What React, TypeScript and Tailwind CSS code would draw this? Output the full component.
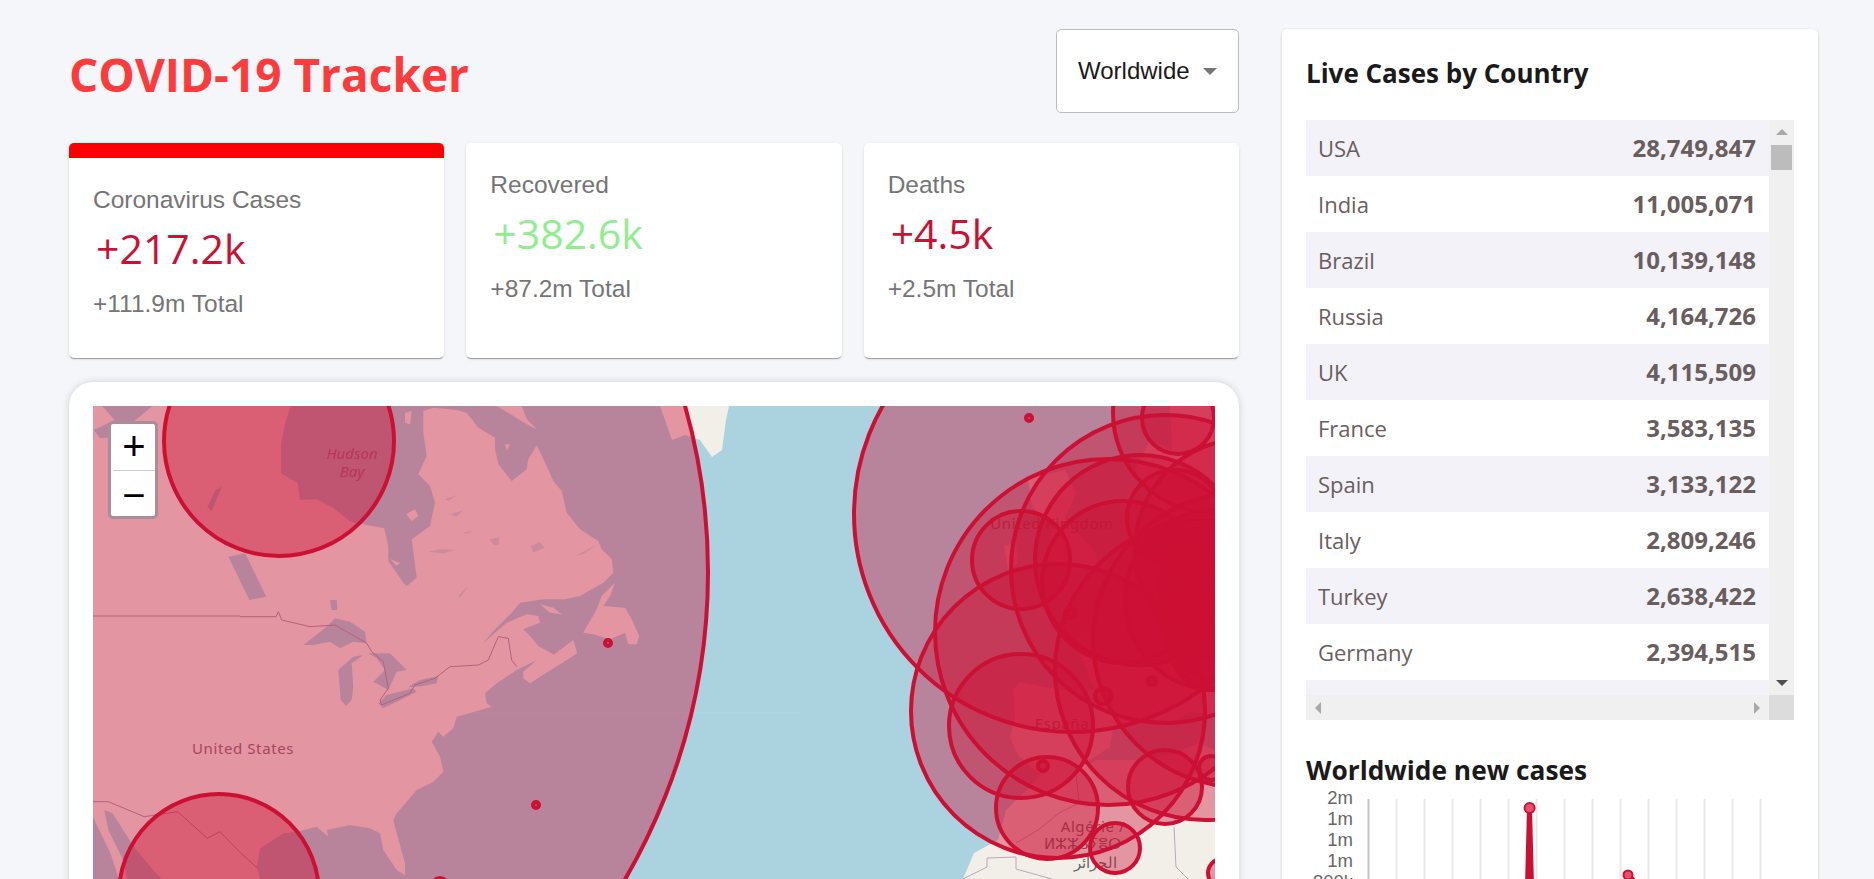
import React from "react";

const SANS = "font-['Open_Sans','Noto_Sans',sans-serif]";
const ARIAL = "font-['Liberation_Sans',Arial,sans-serif]";

const stats = [
  { title: "Coronavirus Cases", cases: "+217.2k", total: "+111.9m Total", active: true, color: "text-[#cc1034]" },
  { title: "Recovered", cases: "+382.6k", total: "+87.2m Total", active: false, color: "text-[#90ee90]" },
  { title: "Deaths", cases: "+4.5k", total: "+2.5m Total", active: false, color: "text-[#cc1034]" },
];

const countries = [
  ["USA", "28,749,847"],
  ["India", "11,005,071"],
  ["Brazil", "10,139,148"],
  ["Russia", "4,164,726"],
  ["UK", "4,115,509"],
  ["France", "3,583,135"],
  ["Spain", "3,133,122"],
  ["Italy", "2,809,246"],
  ["Turkey", "2,638,422"],
  ["Germany", "2,394,515"],
];

// [x, y, r] in page pixels, the map group is shifted back to its own origin
const circles: number[][] = [
  [98, 572, 610],
  [279, 441, 115],
  [219, 894, 100],
  [608, 643, 3],
  [536, 805, 3],
  [440, 886, 8],
  [1072, 514, 218],
  [1058, 711, 147],
  [1108, 632, 173],
  [1165, 569, 154],
  [1140, 560, 105],
  [1021, 560, 49],
  [1021, 726, 72],
  [1047, 808, 51],
  [1115, 848, 25],
  [1165, 787, 37],
  [1205, 670, 150],
  [1178, 418, 36],
  [1213, 413, 100],
  [1123, 582, 81],
  [1175, 518, 48],
  [1245, 549, 110],
  [1240, 640, 147],
  [1215, 600, 90],
  [1220, 600, 55],
  [1225, 620, 62],
  [1230, 590, 70],
  [1215, 640, 48],
  [1205, 620, 40],
  [1215, 600, 50],
  [1210, 655, 35],
  [1029, 418, 3],
  [1043, 766, 5],
  [1103, 696, 8],
  [1070, 613, 5],
  [1152, 681, 4],
  [1211, 768, 12],
  [1222, 873, 14],
];

const months = Array.from({ length: 15 }, (_, i) => 62.5 + i * 28);

// coastlines were read off crops of different scales, these bring them to page pixels
type Pt = number[];
const fromWest = (p: Pt[]) => p.map(([x, y]) => [60 + x / 2.376, 380 + y / 3]);
const fromQuebec = (p: Pt[]) => p.map(([x, y]) => [380 + x / 3, 406 + y / 3]);
const fromLakes = (p: Pt[]) => p.map(([x, y]) => [240 + x / 3, 600 + y / 3]);
const toPath = (p: Pt[]) => "M" + p.map(([x, y]) => `${x.toFixed(1)} ${y.toFixed(1)}`).join("L") + "Z";

const mainland = toPath([
  ...fromWest([
    [78, 78], [548, 78], [535, 130], [525, 190], [525, 280], [565, 310], [570, 360], [610, 358], [650, 385], [690, 425], [770, 445],
  ]),
  ...fromQuebec([
    [25, 420], [25, 465], [70, 530], [80, 540], [110, 515], [95, 400], [150, 360], [165, 290], [150, 240], [115, 205], [140, 150], [130, 80], [130, 15], [160, 5], [230, 12], [260, 20], [295, 65], [345, 95], [345, 130], [355, 175], [395, 225], [440, 190], [445, 160], [470, 118], [500, 180], [520, 225], [545, 255], [560, 320], [600, 370], [655, 405], [665, 430], [695, 460], [700, 500], [670, 530], [600, 570], [555, 580], [490, 580], [420, 590], [395, 620], [335, 680], [310, 712], [345, 680], [380, 650], [440, 625], [475, 630], [480, 650], [430, 670], [450, 690], [475, 720], [520, 745], [550, 770], [530, 775],
  ]),
  ...fromLakes([
    [850, 235], [850, 215], [890, 180], [830, 210], [770, 250], [735, 280], [740, 310], [755, 320], [650, 350], [640, 385], [610, 410], [595, 395], [575, 425], [600, 470], [610, 515], [580, 545], [530, 570], [470, 640], [460, 660], [470, 700], [495, 790], [495, 825], [470, 810], [430, 750], [420, 700], [390, 685], [330, 675], [260, 690], [265, 710], [230, 680], [170, 695], [130, 700], [60, 745], [50, 800], [60, 837], [60, 1000],
  ]),
  ...fromWest([
    [240, 1600], [240, 1497], [205, 1445], [175, 1400], [125, 1300], [105, 1290], [115, 1350], [150, 1440], [160, 1497], [140, 1497], [120, 1420], [78, 1310],
  ]),
]);

const islands = [
  fromQuebec([[610, 680], [650, 610], [665, 570], [705, 530], [690, 570], [670, 600], [735, 605], [755, 640], [778, 690], [770, 715], [745, 715], [735, 680], [690, 700], [640, 685]]),
  fromQuebec([[480, 595], [520, 605], [545, 625], [510, 620]]),
  fromQuebec([[78, 325], [105, 310], [115, 330], [95, 345]]),
  fromQuebec([[30, 460], [60, 470], [50, 480]]),
  fromQuebec([[75, 20], [95, 15], [90, 55], [75, 50]]),
  fromQuebec([[350, 0], [425, 0], [440, 40], [470, 70], [450, 60], [400, 30]]),
  fromQuebec([[375, 115], [390, 115], [380, 135]]),
  fromLakes([[850, 235], [870, 250], [900, 230], [1012, 160], [1000, 120], [960, 150]]),
];

const lakes = [
  fromLakes([[190, 135], [260, 80], [285, 55], [330, 65], [375, 95], [380, 130], [340, 125], [300, 145], [270, 125], [220, 135]]),
  fromLakes([[295, 210], [340, 170], [370, 165], [335, 190], [340, 260], [335, 300], [318, 318], [302, 300]]),
  fromLakes([[385, 160], [450, 160], [500, 210], [470, 215], [445, 270], [400, 245], [435, 210], [410, 175]]),
  fromLakes([[415, 310], [440, 285], [520, 265], [530, 275], [470, 305], [430, 325]]),
  fromLakes([[505, 260], [540, 240], [595, 228], [590, 250], [550, 258], [515, 262]]),
  fromLakes([[270, 0], [290, 0], [292, 30], [275, 30]]),
  fromWest([[80, 150], [130, 120], [100, 78], [220, 78], [170, 130], [140, 170], [95, 175]]),
  fromWest([[400, 530], [440, 520], [490, 650], [450, 660]]),
  fromWest([[370, 330], [385, 320], [360, 395], [350, 380]]),
];

// the little lakes of quebec read paler than the great lakes
const ponds = [
  fromQuebec([[145, 437], [180, 430], [225, 432], [190, 442]]),
  fromQuebec([[245, 382], [275, 374], [270, 381]]),
  fromQuebec([[452, 420], [480, 408], [493, 425], [460, 440]]),
  fromQuebec([[328, 400], [358, 394], [356, 416], [342, 418]]),
  fromQuebec([[585, 450], [650, 417], [610, 443]]),
  fromQuebec([[235, 570], [265, 540], [240, 576]]),
  fromQuebec([[195, 280], [230, 267], [205, 284]]),
  fromQuebec([[212, 325], [250, 312], [228, 333]]),
];

const borders =
  "M93 616L240 616" +
  toPath(
    fromLakes([[0, 50], [108, 50], [115, 35], [125, 60], [210, 80], [285, 75], [380, 130], [395, 155], [430, 185], [445, 265], [420, 300], [425, 315], [510, 280], [525, 255], [585, 235], [630, 200], [715, 195], [745, 180], [775, 110], [805, 115], [815, 180], [830, 200]])
  ).replace("Z", "");
const mexicoBorder = toPath(
  fromWest([[78, 1265], [115, 1265], [200, 1310], [280, 1295], [350, 1375], [380, 1355], [430, 1420], [470, 1465]])
).replace("Z", "");

function WorldMap() {
  return (
    <svg className="block h-full w-full" viewBox="0 0 1122 560">
      <defs>
        <filter id="tiles" x="0" y="0" width="100%" height="100%">
          <feGaussianBlur stdDeviation="0.6" />
        </filter>
      </defs>
      <g transform="translate(-93 -406)">
        <rect x="93" y="406" width="1122" height="560" fill="#aad3df" />

        <g filter="url(#tiles)">
          <path fill="#f2efe9" d={mainland} />
          {islands.map((p, i) => (
            <path key={i} fill="#f2efe9" d={toPath(p)} />
          ))}
          {lakes.map((p, i) => (
            <path key={i} fill="#aad3df" d={toPath(p)} />
          ))}
          {ponds.map((p, i) => (
            <path key={i} fill="#aad3df" fillOpacity="0.6" d={toPath(p)} />
          ))}

          {/* greenland tip, europe, africa */}
          <path fill="#f2efe9" d="M660 406L672 440L685 435L700 440L712 457L722 450L726 420L729 406Z" />
          <path
            fill="#f2efe9"
            d="M1215 545L1150 555L1120 585L1095 625L1075 640L1085 665L1095 690L1060 690L1020 682L1013 690L1015 717L1010 737L1018 755L1038 773L1050 772L1082 773L1090 760L1110 747L1113 728L1135 720L1170 722L1190 712L1215 715Z"
          />
          <path
            fill="#f2efe9"
            d="M963 879L974 853L998 840L1006 810L1030 787L1042 772L1082 768L1096 760L1140 760L1170 755L1198 743L1215 750L1215 966L963 966Z"
          />
          <path fill="#f2efe9" d="M1028 479L1065 470L1076 493L1065 519L1093 549L1100 565L1065 572L1048 556L1052 529L1032 506Z" />
          <path fill="#f2efe9" d="M1004 546L1016 543L1018 563L1008 570Z" />
          <path fill="#f2efe9" d="M1215 406L1170 406L1172 450L1150 440L1135 470L1160 510L1190 520L1215 530Z" />

          <g fill="none" stroke="#a894ad" strokeWidth="1">
            <path d={borders} />
            <path d={mexicoBorder} />
            <path
              stroke="#b9a8b9"
              d="M963 879L987 867L987 858L1016 857L1016 869L1052 879M1016 843L1038 830L1059 813L1079 803L1076 773M1174 827L1176 867L1188 879"
            />
          </g>
        </g>
        <path d="M93 713L800 713" stroke="#ffffff" strokeOpacity="0.12" strokeWidth="1" />

        <g className="font-['Noto_Sans',sans-serif]">
          <text x="243" y="754" textAnchor="middle" fontSize="15" fill="#8f6a80" letterSpacing="0.6">United States</text>
          <text x="352" y="459" textAnchor="middle" fontSize="15" fontStyle="italic" fill="#8f7c9c">Hudson</text>
          <text x="352" y="477" textAnchor="middle" fontSize="15" fontStyle="italic" fill="#8f7c9c">Bay</text>
          <text x="1052" y="529" textAnchor="middle" fontSize="15" fill="#666666" letterSpacing="0.6">United Kingdom</text>
          <text x="1062" y="729" textAnchor="middle" fontSize="15" fill="#666666" letterSpacing="0.6">España</text>
          <text x="1093" y="832" textAnchor="middle" fontSize="15" fill="#666666" letterSpacing="0.6">Algérie /</text>
          <text x="1082" y="849" textAnchor="middle" fontSize="15" fill="#666666">ⵍⵣⵣⴰⵢⴻⵔ</text>
          <text x="1095" y="868" textAnchor="middle" fontSize="15" fill="#666666">الجزائر</text>
        </g>

        {circles.map(([x, y, r], i) => (
          <circle key={i} cx={x} cy={y} r={r} fill="#cc1034" fillOpacity="0.4" stroke="#cc1034" strokeWidth="4" />
        ))}
      </g>
    </svg>
  );
}

function Chart() {
  return (
    <svg className="mt-[8px] block h-[130px] w-[488px] overflow-visible" viewBox="0 0 488 130">
      {months.map((x, i) => (
        <line key={x} x1={x} x2={x} y1="4" y2="130" stroke={i === 0 ? "#c4c4c4" : "#e8e8e8"} strokeWidth="2" />
      ))}
      {[
        ["2m", 3],
        ["1m", 24],
        ["1m", 45],
        ["1m", 66],
        ["800k", 87],
      ].map(([label, y], i) => (
        <text key={i} x="47" y={Number(y) + 6} textAnchor="end" fontSize="18.5" fill="#666666" className={ARIAL}>
          {label}
        </text>
      ))}
      <path d="M221 13L226 13L229 130L218 130Z" fill="#cc1034" />
      <circle cx="223.6" cy="13" r="5" fill="#e8506e" stroke="#cc1034" strokeWidth="2" />
      <path d="M320 80L326 80L334 90L318 90Z" fill="#cc1034" />
      <circle cx="322" cy="80" r="4.5" fill="#e8506e" stroke="#cc1034" strokeWidth="2" />
    </svg>
  );
}

export default function App() {
  return (
    <div className="flex h-screen justify-between overflow-hidden bg-[#f4f6fa] pt-[29px] pr-[56px] pl-[69px]">
      <div className="w-[1170px]">
        <div className="flex items-start justify-between">
          <h1 className={`${SANS} mt-[12px] text-[46px] leading-[66px] font-bold text-[#fc3c3c]`}>COVID-19 Tracker</h1>
          <div className="flex h-[84px] w-[183px] items-center justify-between rounded-[5px] border border-[#bdbdbd] bg-white pr-[21px] pl-[21px]">
            <span className={`${ARIAL} mt-[-1px] text-[24px] text-[#1a1a1a]`}>Worldwide</span>
            <span className="h-0 w-0 border-x-[7px] border-t-[7px] border-x-transparent border-t-[#757575]" />
          </div>
        </div>

        <div className="mt-[30px] grid grid-cols-3 gap-[22px]">
          {stats.map((s) => (
            <div
              key={s.title}
              className={`h-[215px] rounded-[5px] bg-white px-[24px] pt-[26px] shadow-[0_2px_1px_-1px_rgba(0,0,0,0.3),0_1px_3px_0_rgba(0,0,0,0.12)] ${
                s.active ? "border-t-[15px] border-[#ff0000]" : ""
              }`}
            >
              <div className={`${ARIAL} text-[24.5px] leading-[32px] text-[#757575]`}>{s.title}</div>
              <div className={`${SANS} mt-[5px] pl-[3px] text-[41px] leading-[54px] ${s.color}`}>{s.cases}</div>
              <div className={`${ARIAL} mt-[13px] text-[24.5px] leading-[32px] text-[#757575]`}>{s.total}</div>
            </div>
          ))}
        </div>

        <div className="mt-[24px] h-[620px] rounded-[24px] bg-white p-[24px] shadow-[0_0_8px_-1px_rgba(0,0,0,0.2)]">
          <div className="relative h-[560px] overflow-hidden">
            <WorldMap />
            <div className="absolute top-[15px] left-[15px] w-[50px] overflow-hidden rounded-[5px] border-[3px] border-[#a98d99] bg-white pl-[2px] text-center text-black">
              <div className={`${ARIAL} h-[47px] border-b border-[#cccccc] text-[40px] leading-[44px]`}>+</div>
              <div className={`${ARIAL} h-[45px] text-[40px] leading-[49px]`}>−</div>
            </div>
          </div>
        </div>
      </div>

      <div className="h-[900px] w-[536px] rounded-[5px] bg-white px-[24px] pt-[24px] shadow-[0_1px_3px_0_rgba(0,0,0,0.2)]">
        <h3 className={`${SANS} text-[26px] leading-[40px] font-bold text-[#1a1a1a]`}>Live Cases by Country</h3>
        <div className="mt-[27px] grid h-[600px] grid-cols-[463px_25px] grid-rows-[575px_25px]">
          <div className="overflow-hidden bg-[#f2f2f8]">
            {countries.map(([name, count], i) => (
              <div
                key={name}
                className={`flex h-[56px] items-center justify-between pr-[13px] pl-[12px] ${SANS} text-[#6a5d5d] ${
                  i % 2 === 0 ? "bg-[#f2f2f8]" : "bg-white"
                }`}
              >
                <span className="text-[22px]">{name}</span>
                <span className="text-[24px] font-bold">{count}</span>
              </div>
            ))}
          </div>
          {/* scrollbars are drawn by hand so they match the windows look */}
          <div className="flex flex-col items-center bg-[#f0f0f0]">
            <span className="mt-[9px] h-0 w-0 border-x-[6px] border-b-[6px] border-x-transparent border-b-[#a8a8a8]" />
            <span className="mt-[10px] h-[25px] w-[21px] bg-[#bcbcbc]" />
            <span className="mt-auto mb-[9px] h-0 w-0 border-x-[6px] border-t-[6px] border-x-transparent border-t-[#505050]" />
          </div>
          <div className="flex items-center justify-between bg-[#f0f0f0] px-[9px]">
            <span className="h-0 w-0 border-y-[6px] border-r-[6px] border-y-transparent border-r-[#a8a8a8]" />
            <span className="h-0 w-0 border-y-[6px] border-l-[6px] border-y-transparent border-l-[#a8a8a8]" />
          </div>
          <div className="bg-[#dcdcdc]" />
        </div>
        <h3 className={`${SANS} mt-[33px] text-[26.3px] leading-[34px] font-bold text-[#1a1a1a]`}>Worldwide new cases</h3>
        <Chart />
      </div>
    </div>
  );
}
